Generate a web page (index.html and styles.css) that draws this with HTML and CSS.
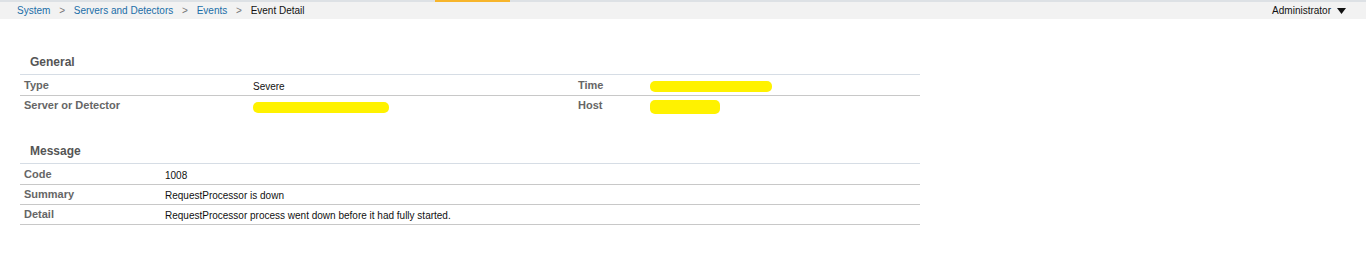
FILE: index.html
```html
<!DOCTYPE html>
<html lang="en">
<head>
    <meta charset="UTF-8">
    <title>Event Detail</title>
    <link rel="stylesheet" href="styles.css">
</head>
<body>
    <div class="top-bar">
        <div class="top-accent"></div>
        <div class="breadcrumb-bar">
            <nav class="breadcrumb">
                <a href="#">System</a>
                <span class="sep">&gt;</span>
                <a href="#">Servers and Detectors</a>
                <span class="sep">&gt;</span>
                <a href="#">Events</a>
                <span class="sep">&gt;</span>
                <span class="current">Event Detail</span>
            </nav>
            <div class="user-menu">
                Administrator
                <svg class="caret" width="9" height="6" viewBox="0 0 9 6"><path d="M0 0h9L4.5 6z" fill="#111"/></svg>
            </div>
        </div>
    </div>

    <div class="content">
        <div class="section">
            <h2 class="section-title">General</h2>
            <table class="detail-table general">
                <tr>
                    <th class="c1">Type</th>
                    <td class="c2">Severe</td>
                    <th class="c3">Time</th>
                    <td class="c4"><span class="redacted r-time"></span></td>
                </tr>
                <tr class="no-border">
                    <th class="c1">Server or Detector</th>
                    <td class="c2"><span class="redacted r-server"></span></td>
                    <th class="c3">Host</th>
                    <td class="c4"><span class="redacted r-host"></span></td>
                </tr>
            </table>
        </div>

        <div class="section">
            <h2 class="section-title">Message</h2>
            <table class="detail-table message">
                <tr>
                    <th class="m1">Code</th>
                    <td>1008</td>
                </tr>
                <tr>
                    <th class="m1">Summary</th>
                    <td>RequestProcessor is down</td>
                </tr>
                <tr>
                    <th class="m1">Detail</th>
                    <td>RequestProcessor process went down before it had fully started.</td>
                </tr>
            </table>
        </div>
    </div>
</body>
</html>
```

FILE: styles.css
```css
* {
    margin: 0;
    padding: 0;
    box-sizing: border-box;
}

body {
    font-family: 'Liberation Sans', Arial, sans-serif;
    font-size: 10px;
    color: #111;
    background: #fff;
}

.top-bar {
    border-top: 2px solid #dde1e5;
    position: relative;
}

.top-accent {
    position: absolute;
    top: -2px;
    left: 435px;
    width: 75px;
    height: 2px;
    background: #f7b52c;
}

.breadcrumb-bar {
    background: #f2f2f2;
    height: 17px;
    display: flex;
    align-items: center;
    justify-content: space-between;
    padding: 0 20px 0 17px;
}

.breadcrumb a {
    color: #1a6ea8;
    text-decoration: none;
}

.breadcrumb .sep {
    color: #777;
    margin: 0 6px;
}

.breadcrumb .current {
    color: #111;
}

.user-menu {
    color: #111;
    display: flex;
    align-items: center;
    gap: 6px;
}

.content {
    padding: 36px 0 0 20px;
}

.section {
    width: 900px;
    margin-bottom: 29px;
}

.section-title {
    font-size: 12px;
    font-weight: bold;
    color: #555;
    padding: 0 10px 5px;
    border-bottom: 1px solid #d6dde5;
}

.detail-table {
    width: 100%;
    border-collapse: collapse;
}

.detail-table tr {
    border-bottom: 1px solid #c8c8c8;
}

.detail-table tr.no-border {
    border-bottom: none;
}

.detail-table th,
.detail-table td {
    height: 20px;
    padding: 0 4px;
    text-align: left;
    vertical-align: middle;
}

.detail-table td {
    padding-top: 3px;
}

.detail-table th {
    color: #666;
    font-size: 11px;
    font-weight: bold;
}

.general .c1 { width: 229px; }
.general .c2 { width: 325px; }
.general .c3 { width: 72px; }

.message .m1 { width: 141px; }

.redacted {
    display: inline-block;
    height: 11px;
    background: #fff200;
    border-radius: 5px;
    vertical-align: middle;
}

.r-time { width: 122px; }
.r-server { width: 136px; }
.r-host { width: 70px; height: 14px; }
```
